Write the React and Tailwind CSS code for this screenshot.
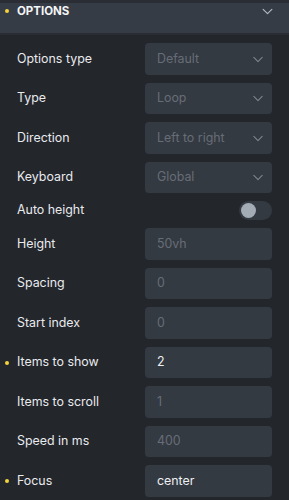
import React from "react";

const Chevron = ({ className }) => (
  <svg viewBox="0 0 12 8" className={className} fill="none" stroke="currentColor" strokeWidth="1.3" strokeLinecap="round" strokeLinejoin="round">
    <path d="M1 1.5l5 5 5-5" />
  </svg>
);

const Dot = ({ top = "top-1/2" }) => <span className={`absolute left-[5px] ${top} -translate-y-1/2 w-[4px] h-[4px] rounded-full bg-[#f5d33b]`} />;

const Row = ({ label, active, children, h = "h-[31.5px]" }) => (
  <div className={`relative flex items-center pl-[17px] pr-[17px] ${h}`}>
    {active && <Dot />}
    <div className="flex-1 text-[12.4px] text-[#e9ebee]">{label}</div>
    {children}
  </div>
);

const Select = ({ value }) => (
  <div className="w-[127px] h-full rounded-[4px] bg-[#343a42] flex items-center justify-between pl-[12px] pr-[9px]">
    <span className="text-[12.4px] text-[#676d76]">{value}</span>
    <Chevron className="w-[10px] h-[7px] text-[#7e848c]" />
  </div>
);

const Input = ({ value, active }) => (
  <div className="w-[127px] h-full rounded-[4px] bg-[#343a42] flex items-center pl-[12px]">
    <span className={`text-[12.4px] ${active ? "text-[#eef0f2]" : "text-[#676d76]"}`}>{value}</span>
  </div>
);

export default function App() {
  return (
    <div className="w-[289px] h-[500px] overflow-hidden bg-[#23262b]" style={{ fontFamily: "Inter, 'Noto Sans', sans-serif" }}>
      <div className="h-[3px] bg-[#2a2e34]" />
      <div className="relative h-[32px] bg-[#363c45] flex items-start pt-[1px] pl-[17px] pr-[16px] border-b-[2px] border-[#2a2e34]">
        <Dot top="top-[8px]" />
        <span className="flex-1 text-[11.5px] leading-[14px] font-bold text-[#f4f5f7]">OPTIONS</span>
        <Chevron className="w-[11px] h-[7px] text-[#b5bac1] mt-[4px]" />
      </div>
      <div className="flex flex-col gap-[8px] pt-[8.3px]">
        <Row label="Options type"><Select value="Default" /></Row>
        <Row label="Type"><Select value="Loop" /></Row>
        <Row label="Direction"><Select value="Left to right" /></Row>
        <Row label="Keyboard"><Select value="Global" /></Row>
        <Row label="Auto height" h="h-[19px]">
          <div className="w-[33px] h-[19px] rounded-full bg-[#343a42] flex items-center pl-[2px]">
            <div className="w-[15px] h-[15px] rounded-full bg-[#a3abb5]" />
          </div>
        </Row>
        <Row label="Height"><Input value="50vh" /></Row>
        <Row label="Spacing"><Input value="0" /></Row>
        <Row label="Start index"><Input value="0" /></Row>
        <Row label="Items to show" active><Input value="2" active /></Row>
        <Row label="Items to scroll"><Input value="1" /></Row>
        <Row label="Speed in ms"><Input value="400" /></Row>
        <Row label="Focus" active><Input value="center" active /></Row>
      </div>
    </div>
  );
}
